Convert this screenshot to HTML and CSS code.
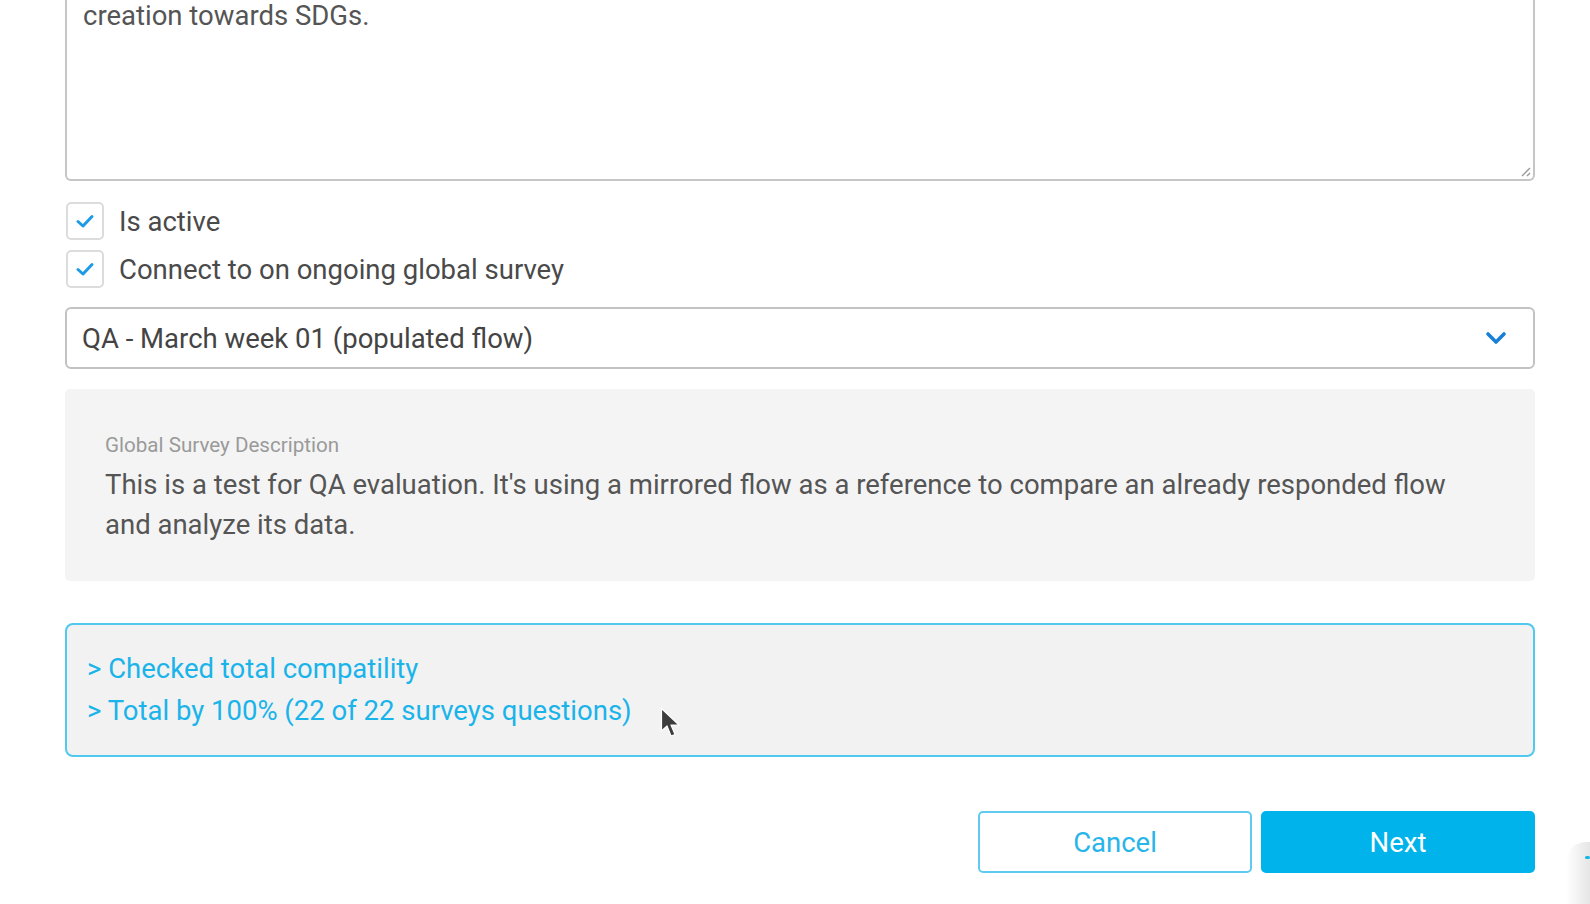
FILE: index.html
```html
<!DOCTYPE html>
<html lang="en">
<head>
<meta charset="utf-8">
<title>Survey settings</title>
<link rel="stylesheet" href="styles.css">
</head>
<body>
<main class="form">
  <div class="textarea">
    <p class="textarea-text">creation towards SDGs.</p>
    <svg class="resize" width="12" height="12" viewBox="0 0 12 12"><path d="M11 3 L3 11 M11 8 L8 11" stroke="#9a9a9a" stroke-width="1.4" fill="none"/></svg>
  </div>

  <div class="checks">
    <label class="check-row">
      <span class="checkbox"><svg width="20" height="16" viewBox="0 0 20 16"><path d="M3 8.5 L8 13 L17 3.5" stroke="#1e9be6" stroke-width="3" fill="none" stroke-linecap="round" stroke-linejoin="round"/></svg></span>
      <span class="check-label">Is active</span>
    </label>
    <label class="check-row">
      <span class="checkbox"><svg width="20" height="16" viewBox="0 0 20 16"><path d="M3 8.5 L8 13 L17 3.5" stroke="#1e9be6" stroke-width="3" fill="none" stroke-linecap="round" stroke-linejoin="round"/></svg></span>
      <span class="check-label">Connect to on ongoing global survey</span>
    </label>
  </div>

  <div class="select">
    <span class="select-value">QA - March week 01 (populated flow)</span>
    <svg class="chevron" width="22" height="14" viewBox="0 0 22 14"><path d="M3 3 L11 11 L19 3" stroke="#1a7fd6" stroke-width="3.6" fill="none" stroke-linecap="round" stroke-linejoin="round"/></svg>
  </div>

  <section class="desc">
    <div class="desc-label">Global Survey Description</div>
    <p class="desc-text">This is a test for QA evaluation. It's using a mirrored flow as a reference to compare an already responded flow and analyze its data.</p>
  </section>

  <section class="compat">
    <div class="compat-line">&gt; Checked total compatility</div>
    <div class="compat-line">&gt; Total by 100% (22 of 22 surveys questions)</div>
    <svg class="cursor" width="22" height="32" viewBox="0 0 22 32"><path d="M1.5 1.5 L1.5 24 L7 19 L11 29 L15 27.5 L11 18 L19 18 Z" fill="#3d3d3d" stroke="#fff" stroke-width="1.2" stroke-linejoin="round"/></svg>
  </section>

  <div class="actions">
    <button class="btn btn-outline">Cancel</button>
    <button class="btn btn-primary">Next</button>
  </div>
</main>
<div class="edge-shadow"></div>
<span class="floating-mark"></span>
</body>
</html>
```

FILE: styles.css
```css
html, body {
  margin: 0;
  padding: 0;
  background: #ffffff;
  overflow: hidden;
}
body {
  width: 1590px;
  height: 904px;
  font-family: Roboto, "Liberation Sans", Arial, sans-serif;
  position: relative;
}
.form {
  width: 1470px;
  margin-left: 65px;
  display: flex;
  flex-direction: column;
}
.textarea {
  position: relative;
  box-sizing: border-box;
  height: 181px;
  border: 2px solid #c6c6c6;
  border-top: none;
  border-radius: 0 0 6px 6px;
  padding: 0 16px;
}
.textarea-text {
  margin: 0;
  font-size: 27.5px;
  line-height: 32px;
  color: #555;
}
.resize {
  position: absolute;
  right: 2px;
  bottom: 2px;
}
.checks {
  margin-top: 21px;
  display: flex;
  flex-direction: column;
  gap: 10px;
}
.check-row {
  display: flex;
  align-items: center;
  gap: 15px;
  height: 38px;
}
.checkbox {
  box-sizing: border-box;
  width: 38px;
  height: 38px;
  margin-left: 1px;
  border: 2px solid #dcdcdc;
  border-radius: 5px;
  display: flex;
  align-items: center;
  justify-content: center;
  background: #fff;
}
.check-label {
  font-size: 27.5px;
  line-height: 38px;
  padding-top: 2px;
  color: #4a4a4a;
}
.select {
  margin-top: 19px;
  box-sizing: border-box;
  height: 62px;
  border: 2px solid #c2c2c2;
  border-radius: 6px;
  padding: 0 26px 0 15px;
  display: flex;
  align-items: center;
  justify-content: space-between;
}
.select-value {
  font-size: 27.5px;
  color: #444;
}
.desc {
  margin-top: 20px;
  box-sizing: border-box;
  height: 192px;
  background: #f4f4f4;
  border-radius: 5px;
  padding: 44px 40px 0 40px;
}
.desc-label {
  font-size: 20.6px;
  line-height: 24px;
  color: #9a9a9a;
  margin-bottom: 8px;
}
.desc-text {
  margin: 0;
  font-size: 27.5px;
  line-height: 40px;
  color: #555;
}
.compat {
  position: relative;
  margin-top: 42px;
  box-sizing: border-box;
  height: 134px;
  background: #f2f2f2;
  border: 2px solid #50c8f0;
  border-radius: 8px;
  padding: 23px 20px 0 20px;
}
.compat-line {
  font-size: 27.5px;
  line-height: 42px;
  color: #1ab4ea;
}
.cursor {
  position: absolute;
  left: 593px;
  top: 82px;
}
.actions {
  margin-top: 54px;
  display: flex;
  justify-content: flex-end;
  gap: 9px;
}
.btn {
  box-sizing: border-box;
  width: 274px;
  height: 62px;
  border-radius: 5px;
  font-family: Roboto, "Liberation Sans", Arial, sans-serif;
  font-size: 27.5px;
  cursor: pointer;
}
.btn-outline {
  background: #fff;
  border: 2px solid #5fcbf1;
  color: #27b5ea;
}
.btn-primary {
  background: #00b4eb;
  border: 2px solid #00b4eb;
  color: #fff;
}
.edge-shadow {
  position: absolute;
  right: 0;
  top: 842px;
  width: 24px;
  height: 62px;
  border-top-left-radius: 20px;
  background: linear-gradient(to right, rgba(0, 0, 0, 0), rgba(0, 0, 0, 0.1));
}
.floating-mark {
  position: absolute;
  left: 1585px;
  top: 856px;
  width: 5px;
  height: 3px;
  background: #1ab4ea;
  border-radius: 2px;
}
```
